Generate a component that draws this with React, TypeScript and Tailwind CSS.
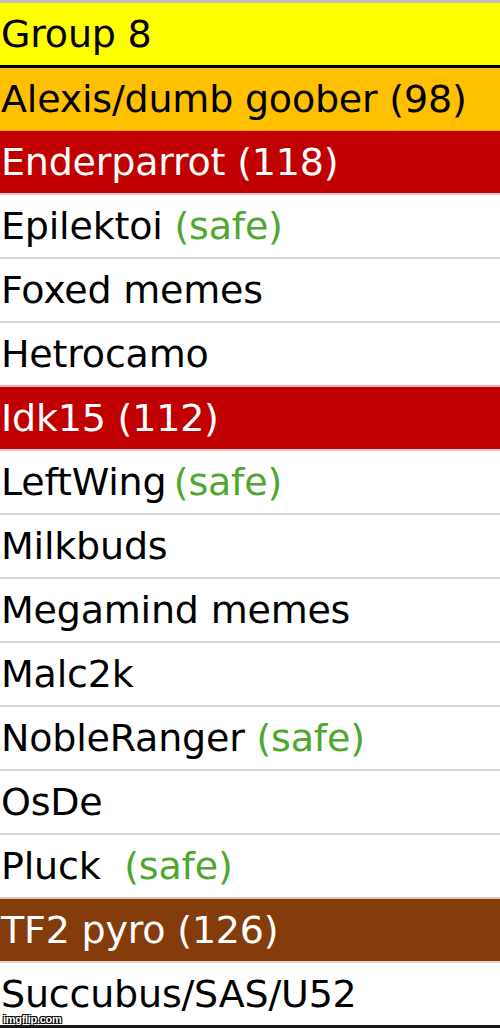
type Row = {
  name: string;
  safe?: string;
  bg: string;
  text: string;
  border: string;
};

const rows: Row[] = [
  { name: 'Group 8', bg: 'bg-[#ffff00]', text: 'text-black', border: 'border-b-[3px] border-black' },
  { name: 'Alexis/dumb goober (98)', bg: 'bg-[#ffc000]', text: 'text-black', border: 'border-b border-[#e8a800]' },
  { name: 'Enderparrot (118)', bg: 'bg-[#c00000]', text: 'text-white', border: 'border-b-2 border-[#f2c4c4]' },
  { name: 'Epilektoi', safe: ' (safe)', bg: 'bg-white', text: 'text-black', border: 'border-b-2 border-[#d6d6d6]' },
  { name: 'Foxed memes', bg: 'bg-white', text: 'text-black', border: 'border-b-2 border-[#d6d6d6]' },
  { name: 'Hetrocamo', bg: 'bg-white', text: 'text-black', border: 'border-b-2 border-[#eab0b0]' },
  { name: 'Idk15 (112)', bg: 'bg-[#c00000]', text: 'text-white', border: 'border-b-2 border-[#f2c4c4]' },
  { name: 'LeftWing', safe: '\u2009(safe)', bg: 'bg-white', text: 'text-black', border: 'border-b-2 border-[#d6d6d6]' },
  { name: 'Milkbuds', bg: 'bg-white', text: 'text-black', border: 'border-b-2 border-[#d6d6d6]' },
  { name: 'Megamind memes', bg: 'bg-white', text: 'text-black', border: 'border-b-2 border-[#d6d6d6]' },
  { name: 'Malc2k', bg: 'bg-white', text: 'text-black', border: 'border-b-2 border-[#d6d6d6]' },
  { name: 'NobleRanger', safe: ' (safe)', bg: 'bg-white', text: 'text-black', border: 'border-b-2 border-[#d6d6d6]' },
  { name: 'OsDe', bg: 'bg-white', text: 'text-black', border: 'border-b-2 border-[#d6d6d6]' },
  { name: 'Pluck', safe: '\u00a0\u00a0(safe)', bg: 'bg-white', text: 'text-black', border: 'border-b-2 border-[#e6c8b8]' },
  { name: 'TF2 pyro (126)', bg: 'bg-[#843c0c]', text: 'text-white', border: 'border-b-2 border-[#ecd2c4]' },
  { name: 'Succubus/SAS/U52', bg: 'bg-white', text: 'text-black', border: 'border-b-0' },
];

export default function App() {
  return (
    <main className="relative w-[500px] h-[1028px] flex flex-col bg-white overflow-hidden font-['DejaVu_Sans',sans-serif]">
      <div className="h-[3px] bg-[#c0c0c0]" />
      {rows.map((r) => (
        <div
          key={r.name}
          className={`flex-1 flex items-center pl-[1px] text-[38px] leading-[30px] tracking-[-0.2px] whitespace-pre ${r.bg} ${r.text} ${r.border}`}
        >
          <span>{r.name}</span>
          {r.safe && <span className="text-[#4ea72e]">{r.safe}</span>}
        </div>
      ))}
      <div className="h-[3px] bg-[#1a1a1a]" />
      <span className="absolute left-[3px] bottom-[4px] text-[11px] leading-[10px] font-bold tracking-[-0.3px] text-white font-['Liberation_Sans',sans-serif] [text-shadow:-1px_-1px_0_#000,1px_-1px_0_#000,-1px_1px_0_#000,1px_1px_0_#000]">
        imgflip.com
      </span>
    </main>
  );
}
